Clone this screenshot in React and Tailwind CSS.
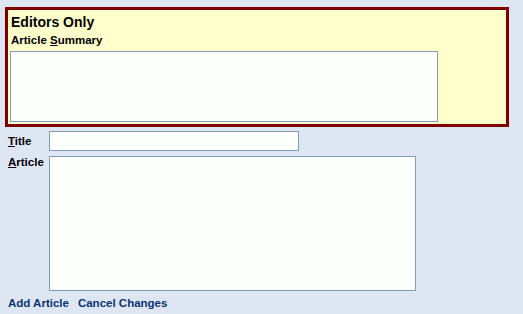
import React from "react";

const App = () => {
  return (
    <div
      className="min-h-[314px] bg-[#dee6f4] pt-[7px] pl-[5px] text-black"
      style={{ fontFamily: '"Liberation Sans", Arial, sans-serif' }}
    >
      {/* editors only box */}
      <div className="w-[504px] h-[120px] border-[3px] border-[#800000] bg-[#ffffcc] pl-[2px] pt-[2px]">
        <h2 className="pl-[1px] text-[14px] font-bold leading-[20px]">Editors Only</h2>
        <label className="block pl-[1px] mt-[1px] text-[11.5px] font-bold leading-[14px]">
          Article <span className="underline">S</span>ummary
        </label>
        <textarea className="block mt-[4px] w-[428px] h-[71px] border border-[#7f9db9] bg-[#fdfffd] resize-none outline-none" />
      </div>

      <div className="grid grid-cols-[41px_1fr] gap-y-[5px] mt-[4px] pl-[3px]">
        <label className="pt-[3px] text-[11.5px] font-bold leading-[14px]">
          <span className="underline">T</span>itle
        </label>
        <input
          type="text"
          className="w-[250px] h-[20px] border border-[#7f9db9] bg-[#fdfffd] outline-none"
        />
        <label className="-mt-[1px] text-[11.5px] font-bold leading-[14px]">
          <span className="underline">A</span>rticle
        </label>
        <textarea className="block w-[367px] h-[135px] border border-[#7f9db9] bg-[#fdfffd] resize-none outline-none" />
      </div>

      <div className="flex gap-[9px] mt-[5px] pl-[3px] text-[11.5px] font-bold leading-[14px] text-[#0a3570]">
        <a href="#" className="cursor-pointer">Add Article</a>
        <a href="#" className="cursor-pointer">Cancel Changes</a>
      </div>
    </div>
  );
};

export default App;
